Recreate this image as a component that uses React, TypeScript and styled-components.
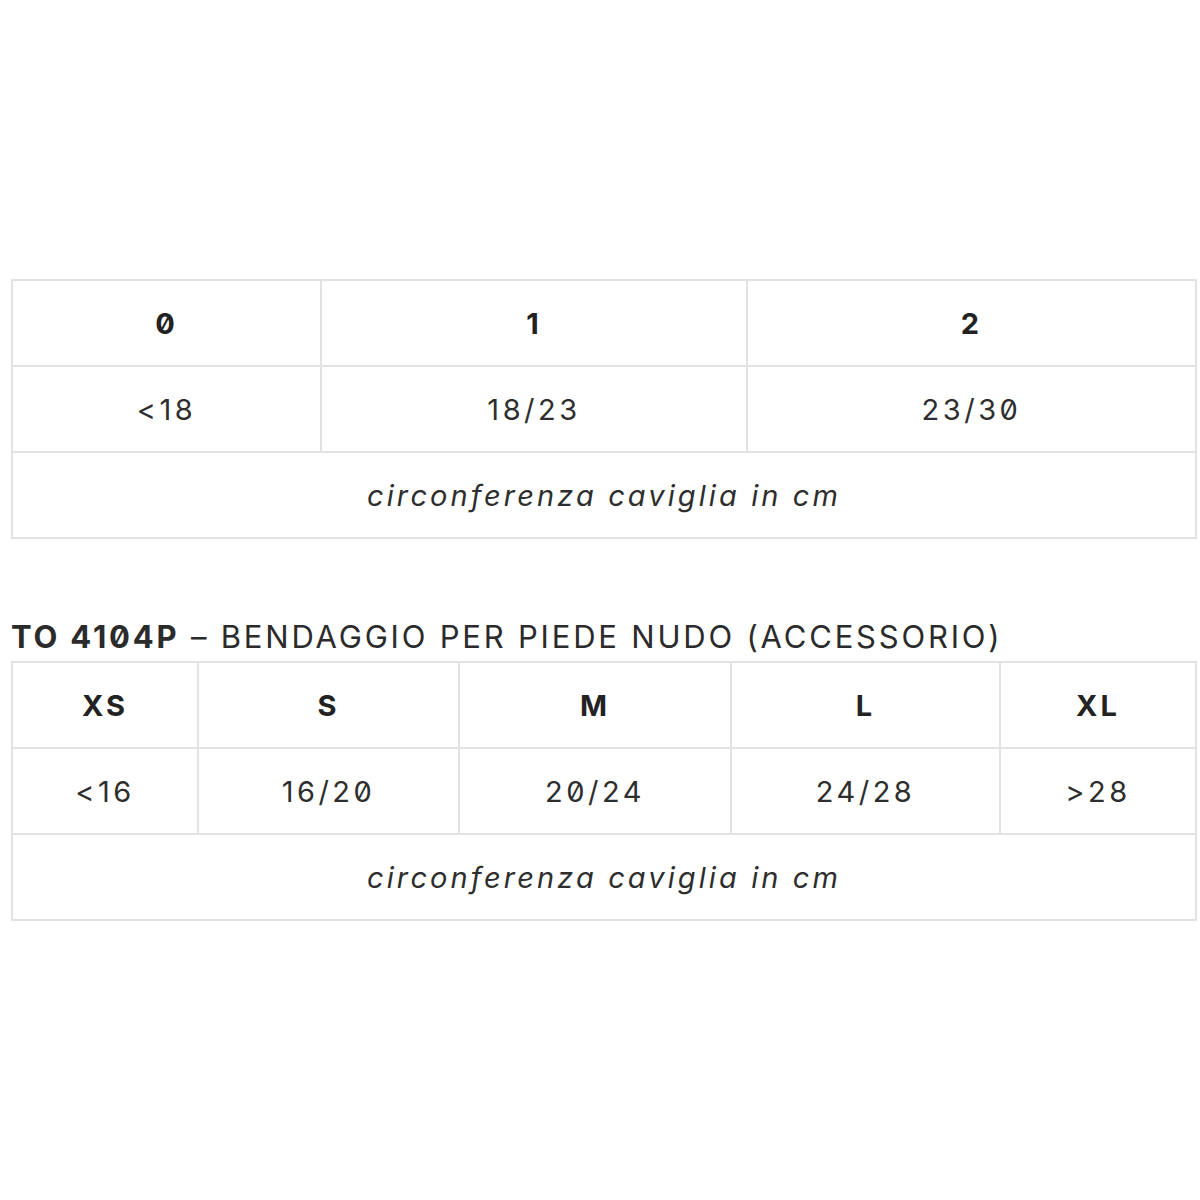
import React from 'react';
import styled, { createGlobalStyle } from 'styled-components';

const GlobalStyle = createGlobalStyle`
  html, body {
    margin: 0;
    padding: 0;
    background: #ffffff;
  }
  body {
    font-family: Inter, "Noto Sans", sans-serif;
    font-feature-settings: 'zero' 1;
    color: #2b2b2b;
  }
`;

const Page = styled.div`
  width: 1184px;
  padding: 279px 0 0 11px;
`;

const Table = styled.table`
  width: 100%;
  border-collapse: collapse;
  table-layout: fixed;
  border: 2px solid #e2e2e2;
`;

const Cell = styled.td<{ $head?: boolean; $note?: boolean }>`
  height: 84px;
  padding: 0;
  border: 2px solid #e2e2e2;
  text-align: center;
  vertical-align: middle;
  font-size: 29px;
  letter-spacing: ${(p) => (p.$head ? '3px' : p.$note ? '3.1px' : '3.5px')};
  font-weight: ${(p) => (p.$head ? 700 : 400)};
  font-style: ${(p) => (p.$note ? 'italic' : 'normal')};
  color: ${(p) => (p.$head ? '#222' : '#2e2e2e')};
`;

const Heading = styled.h2`
  margin: 80px 0 6px 0;
  font-size: 31px;
  font-weight: 400;
  letter-spacing: 2.8px;
  line-height: 36px;
  color: #2b2b2b;

  strong {
    font-weight: 700;
  }
`;

type SizeTable = {
  widths: number[];
  heads: string[];
  values: string[];
};

const first: SizeTable = {
  widths: [309, 426, 449],
  heads: ['0', '1', '2'],
  values: ['<18', '18/23', '23/30'],
};

const second: SizeTable = {
  widths: [186, 261, 272, 269, 196],
  heads: ['XS', 'S', 'M', 'L', 'XL'],
  values: ['<16', '16/20', '20/24', '24/28', '>28'],
};

const SizeGrid: React.FC<{ data: SizeTable }> = ({ data }) => (
  <Table>
    <colgroup>
      {data.widths.map((w, i) => (
        <col key={i} style={{ width: w }} />
      ))}
    </colgroup>
    <tbody>
      <tr>
        {data.heads.map((h) => (
          <Cell key={h} $head>
            {h}
          </Cell>
        ))}
      </tr>
      <tr>
        {data.values.map((v) => (
          <Cell key={v}>{v}</Cell>
        ))}
      </tr>
      <tr>
        <Cell $note colSpan={data.heads.length}>
          circonferenza caviglia in cm
        </Cell>
      </tr>
    </tbody>
  </Table>
);

const App: React.FC = () => (
  <>
    <GlobalStyle />
    <Page>
      <SizeGrid data={first} />
      <Heading>
        <strong>TO 4104P</strong> – BENDAGGIO PER PIEDE NUDO (ACCESSORIO)
      </Heading>
      <SizeGrid data={second} />
    </Page>
  </>
);

export default App;
